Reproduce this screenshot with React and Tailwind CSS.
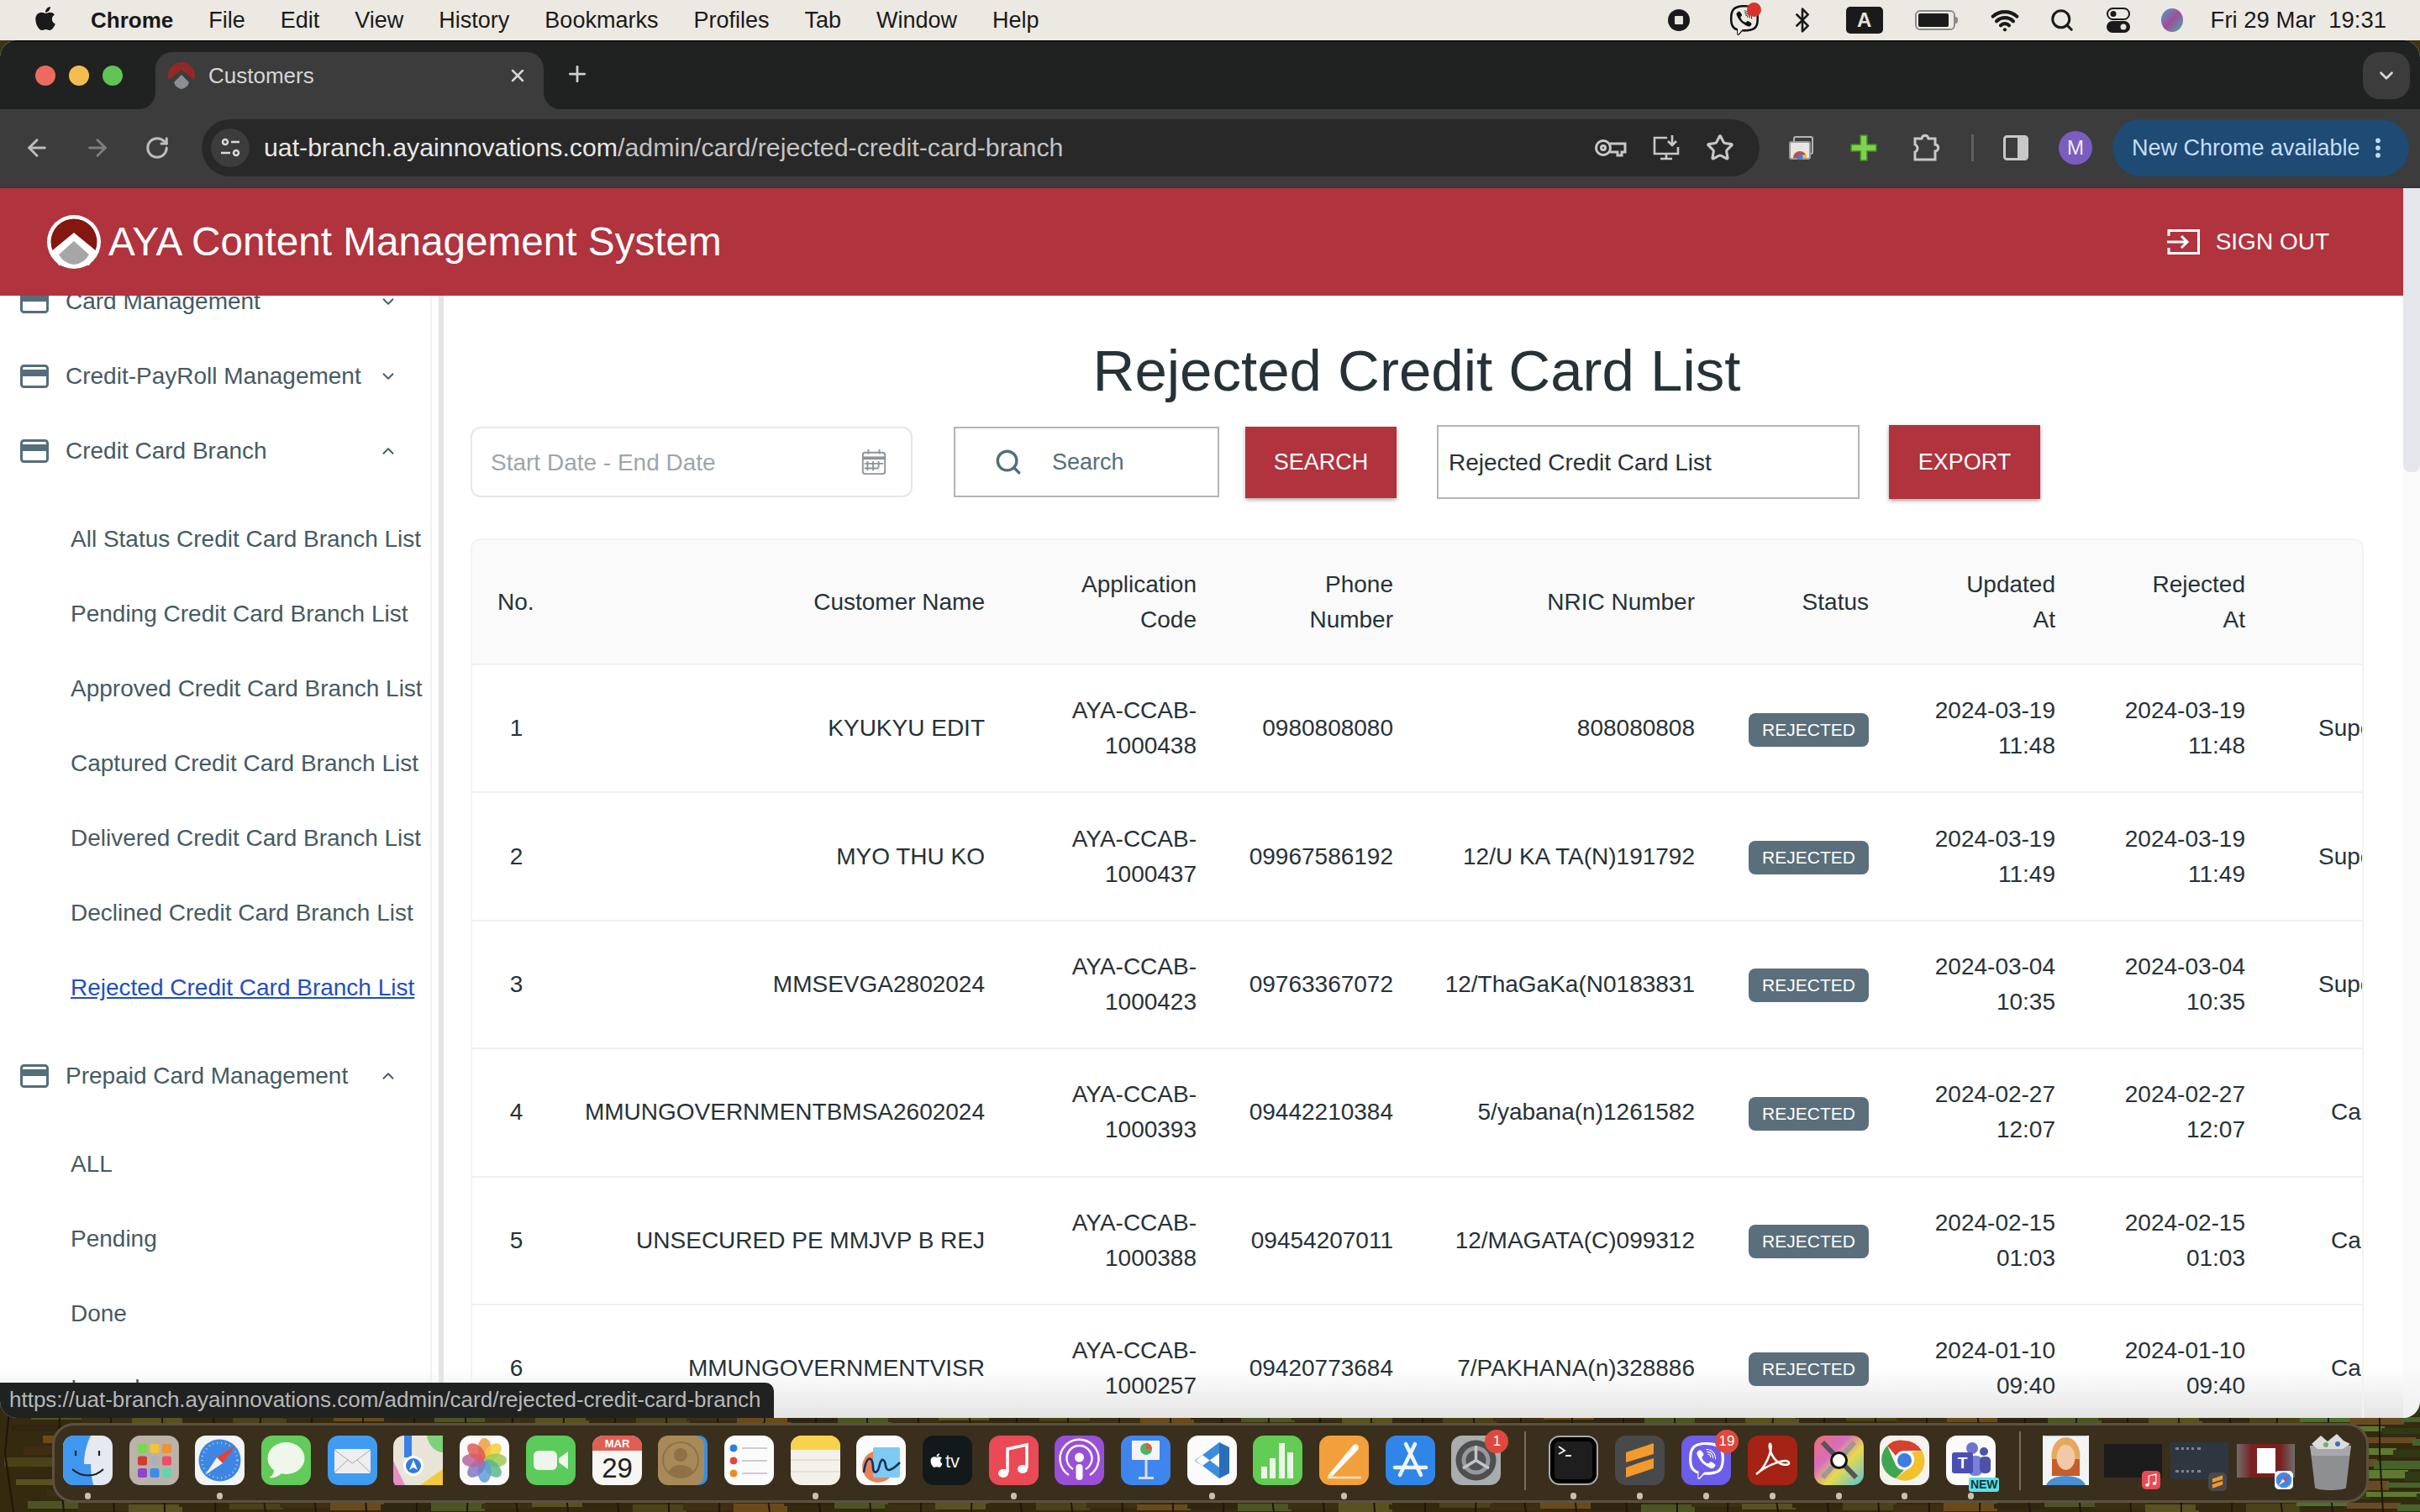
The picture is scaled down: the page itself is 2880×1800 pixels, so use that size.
import { ArrowLeft, ArrowRight, RotateCw, Star, Plus, X, ChevronDown, ChevronUp, Search, Bluetooth, Wifi, MoreVertical } from "lucide-react";
import { FaApple, FaViber } from "react-icons/fa";

const menuItems = ["File", "Edit", "View", "History", "Bookmarks", "Profiles", "Tab", "Window", "Help"];

const rows = [
  { no: 1, name: "KYUKYU EDIT", code: "1000438", phone: "0980808080", nric: "808080808", date: "2024-03-19", time: "11:48", last: "Super" },
  { no: 2, name: "MYO THU KO", code: "1000437", phone: "09967586192", nric: "12/U KA TA(N)191792", date: "2024-03-19", time: "11:49", last: "Super" },
  { no: 3, name: "MMSEVGA2802024", code: "1000423", phone: "09763367072", nric: "12/ThaGaKa(N0183831", date: "2024-03-04", time: "10:35", last: "Super" },
  { no: 4, name: "MMUNGOVERNMENTBMSA2602024", code: "1000393", phone: "09442210384", nric: "5/yabana(n)1261582", date: "2024-02-27", time: "12:07", last: "Card" },
  { no: 5, name: "UNSECURED PE MMJVP B REJ", code: "1000388", phone: "09454207011", nric: "12/MAGATA(C)099312", date: "2024-02-15", time: "01:03", last: "Card" },
  { no: 6, name: "MMUNGOVERNMENTVISR", code: "1000257", phone: "09420773684", nric: "7/PAKHANA(n)328886", date: "2024-01-10", time: "09:40", last: "Card" },
];

const branchLinks = [
  "All Status Credit Card Branch List",
  "Pending Credit Card Branch List",
  "Approved Credit Card Branch List",
  "Captured Credit Card Branch List",
  "Delivered Credit Card Branch List",
  "Declined Credit Card Branch List",
  "Rejected Credit Card Branch List",
];

// AYA logo in the header
const AyaLogo = ({ className }) => (
  <svg viewBox="0 0 64 64" className={className}>
    <circle cx="32" cy="32" r="32" fill="#fff" />
    <circle cx="32" cy="32" r="27.5" fill="#84170f" />
    <path d="M4 44 L32 21 L60 44 L50 60 H14 Z" fill="#fff" />
    <path d="M14 47 L32 31 L50 47 A23 23 0 0 1 32 59 A23 23 0 0 1 14 47Z" fill="#a6a6a6" />
  </svg>
);

// same mark, dimmed, as the tab favicon
const Favicon = () => (
  <svg viewBox="0 0 32 32" className="w-[32px] h-[32px] shrink-0">
    <circle cx="16" cy="16" r="16" fill="#93282a" />
    <path d="M0 22 L16 9 L32 22 V32 H0Z" fill="#3c3c3c" />
    <path d="M7 24 L16 15 L25 24 A11 11 0 0 1 16 32 A11 11 0 0 1 7 24Z" fill="#8b8f92" />
  </svg>
);

const CardIcon = () => (
  <svg viewBox="0 0 34 28" className="w-[34px] h-[28px] shrink-0">
    <rect x="1.5" y="1.5" width="31" height="25" rx="3" fill="none" stroke="#546e7a" strokeWidth="3" />
    <rect x="2" y="6" width="30" height="8" fill="#546e7a" />
  </svg>
);

const NavGroup = ({ label, open }) => (
  <div className="h-[89px] flex items-center pl-[24px] text-[#455a64] shrink-0">
    <CardIcon />
    <span className="ml-[20px] w-[375px] whitespace-nowrap">{label}</span>
    {open ? <ChevronUp size={22} strokeWidth={2} className="-ml-[2px]" /> : <ChevronDown size={22} strokeWidth={2} className="-ml-[2px]" />}
  </div>
);

const NavLink = ({ children, active }) => (
  <div className={`h-[89px] shrink-0 flex items-center pl-[84px] whitespace-nowrap ${active ? "text-[#1d4fc4] underline" : "text-[#455a64]"}`}>{children}</div>
);

const Sidebar = () => (
  <div className="w-[514px] shrink-0 border-r-2 border-[#f0f0f0] overflow-hidden text-[28px]">
    <div className="-mt-[38px] flex flex-col">
      <NavGroup label="Card Management" />
      <NavGroup label="Credit-PayRoll Management" />
      <NavGroup label="Credit Card Branch" open />
      <div className="py-[16px] flex flex-col">
        {branchLinks.map((l, i) => (
          <NavLink key={l} active={i === 6}>{l}</NavLink>
        ))}
      </div>
      <NavGroup label="Prepaid Card Management" open />
      <div className="py-[16px] flex flex-col">
        <NavLink>ALL</NavLink>
        <NavLink>Pending</NavLink>
        <NavLink>Done</NavLink>
        <NavLink>Issued</NavLink>
      </div>
    </div>
  </div>
);

const Th = ({ className = "", children }) => (
  <th className={`font-normal text-right pr-[32px] leading-[42px] border-b-2 border-[#f0f0f0] ${className}`}>{children}</th>
);

const Td = ({ className = "", children }) => (
  <td className={`text-right pr-[32px] leading-[42px] border-b-2 border-[#f0f0f0] ${className}`}>{children}</td>
);

const RejectedTable = () => (
  <div className="w-[2253px] mt-[47px] border-t-2 border-x-2 border-[#f2f2f2] rounded-t-[12px] overflow-hidden text-[28px] text-[#263238]">
    <table className="w-[2252px] table-fixed border-collapse">
      <thead>
        <tr className="h-[148px] bg-[#fafafa]">
          <Th className="w-[105px] !text-left pl-[30px]">No.</Th>
          <Th className="w-[537px]">Customer Name</Th>
          <Th className="w-[252px]">Application<br />Code</Th>
          <Th className="w-[234px]">Phone<br />Number</Th>
          <Th className="w-[359px]">NRIC Number</Th>
          <Th className="w-[207px]">Status</Th>
          <Th className="w-[222px]">Updated<br />At</Th>
          <Th className="w-[226px]">Rejected<br />At</Th>
          <Th></Th>
        </tr>
      </thead>
      <tbody>
        {rows.map((r) => (
          <tr key={r.no} className="h-[152.4px]">
            <td className="text-center border-b-2 border-[#f0f0f0]">{r.no}</td>
            <Td>{r.name}</Td>
            <Td>AYA-CCAB-<br />{r.code}</Td>
            <Td>{r.phone}</Td>
            <Td>{r.nric}</Td>
            <Td>
              <span className="inline-block w-[143px] h-[40px] rounded-[8px] bg-[#5a6f7b] text-white text-[21px] leading-[40px] text-center align-middle">REJECTED</span>
            </Td>
            <Td>{r.date}<br />{r.time}</Td>
            <Td>{r.date}<br />{r.time}</Td>
            <td className={`whitespace-nowrap overflow-hidden border-b-2 border-[#f0f0f0] ${r.last === "Card" ? "pl-[70px]" : "pl-[55px]"}`}>{r.last}</td>
          </tr>
        ))}
      </tbody>
    </table>
  </div>
);

const Toolbar = () => (
  <div className="flex items-center text-[28px]">
    <div className="w-[526px] h-[84px] shrink-0 border-2 border-[#e6e6ea] rounded-[12px] flex items-center justify-between pl-[22px] pr-[28px] text-[#9ea5a8]">
      <span className="pt-[2px]">Start Date - End Date</span>
      <svg viewBox="0 0 32 34" className="w-[32px] h-[32px]" fill="none" stroke="#8d9498" strokeWidth="2">
        <rect x="2" y="5" width="28" height="27" rx="3" />
        <path d="M2 12H30" strokeWidth="4" />
        <path d="M9 1V7M23 1V7M8 16V28M15 16V28M22 16V24M4 19H28M4 25H22" />
      </svg>
    </div>
    <div className="ml-[49px] w-[316px] h-[84px] shrink-0 border-2 border-[#b4b4b4] flex items-center pl-[46px] text-[#546e7a] text-[27px]">
      <Search size={34} strokeWidth={2.4} />
      <span className="ml-[35px]">Search</span>
    </div>
    <div className="ml-[31px] w-[180px] h-[85px] shrink-0 bg-[#b0333e] text-white text-[27px] flex items-center justify-center shadow-[0_2px_5px_rgba(0,0,0,0.35)]">SEARCH</div>
    <div className="ml-[48px] w-[503px] h-[88px] shrink-0 border-2 border-[#b4b4b4] flex items-center pl-[12px] pt-[2px] text-[#263238]">Rejected Credit Card List</div>
    <div className="ml-[35px] w-[180px] h-[88px] shrink-0 bg-[#b0333e] text-white text-[27px] flex items-center justify-center shadow-[0_2px_5px_rgba(0,0,0,0.35)]">EXPORT</div>
  </div>
);

const AppHeader = () => (
  <div className="h-[128px] bg-[#b0333e] flex items-center pl-[56px] pr-[88px] text-white shrink-0">
    <AyaLogo className="w-[64px] h-[64px]" />
    <span className="text-[47.7px] ml-[9px] whitespace-nowrap">AYA Content Management System</span>
    <div className="ml-auto flex items-center text-[28px]">
      <svg viewBox="0 0 40 32" className="w-[40px] h-[32px]" fill="none" stroke="#fff" strokeWidth="3">
        <path d="M2 9V2.5H37.5V29.5H2V23" />
        <path d="M0 16H24M17 9L24 16L17 23" />
      </svg>
      <span className="ml-[18px]">SIGN OUT</span>
    </div>
  </div>
);

const TabStrip = () => (
  <div className="h-[82px] bg-[#202221] border-t-2 border-[#111] flex items-end relative shrink-0">
    <div className="flex gap-[16px] absolute left-[42px] top-[28px]">
      <span className="w-[24px] h-[24px] rounded-full bg-[#ee6a5f]" />
      <span className="w-[24px] h-[24px] rounded-full bg-[#f5bd4f]" />
      <span className="w-[24px] h-[24px] rounded-full bg-[#61c455]" />
    </div>
    <div className="ml-[185px] w-[462px] h-[68px] bg-[#3c3c3c] rounded-t-[20px] flex items-center pl-[15px] pr-[19px] pb-[12px] relative text-[#d6d6d6] text-[26px]">
      <Favicon />
      <span className="ml-[16px]">Customers</span>
      <X size={24} strokeWidth={2.5} className="ml-auto" />
      <div className="absolute -left-[20px] bottom-0 w-[20px] h-[20px] bg-[#3c3c3c]"><div className="w-full h-full bg-[#202221] rounded-br-[20px]" /></div>
      <div className="absolute -right-[20px] bottom-0 w-[20px] h-[20px] bg-[#3c3c3c]"><div className="w-full h-full bg-[#202221] rounded-bl-[20px]" /></div>
    </div>
    <Plus size={30} strokeWidth={2.2} className="ml-[25px] mb-[27px] text-[#d0d0d0]" />
    <div className="absolute right-[12px] top-[12px] w-[56px] h-[56px] rounded-[20px] bg-[#3c3c3c] flex items-center justify-center text-[#d8d8d8]">
      <ChevronDown size={26} strokeWidth={2.5} />
    </div>
  </div>
);

const ExtIcon = () => (
  <svg viewBox="0 0 30 30" className="w-[30px] h-[30px] block">
    <rect x="6" y="2" width="22" height="20" rx="2" fill="#3c3c3c" stroke="#b4b4b4" strokeWidth="2" />
    <rect x="1" y="8" width="24" height="20" rx="2" fill="#e6e6e6" stroke="#9a9a9a" strokeWidth="2" />
    <path d="M5 27 A8 8 0 0 1 21 27Z" fill="#d0483a" />
    <path d="M13 27 A8 8 0 0 1 21 23 V27Z" fill="#f2c230" />
    <circle cx="13" cy="26" r="3.5" fill="#3f7de0" />
  </svg>
);

const BrowserBar = () => (
  <div className="h-[94px] bg-[#3c3c3c] flex items-center border-b-2 border-[#353535] shrink-0 text-[#bdbdbd]">
    <div className="w-[240px] shrink-0 flex items-center pl-[28px] gap-[40px]">
      <ArrowLeft size={32} strokeWidth={2.2} />
      <ArrowRight size={32} strokeWidth={2.2} className="text-[#7f7f7f]" />
      <RotateCw size={30} strokeWidth={2.4} />
    </div>
    <div className="w-[1854px] h-[68px] shrink-0 rounded-full bg-[#282828] flex items-center pl-[11px] pr-[30px]">
      <div className="w-[46px] h-[46px] rounded-full bg-[#3c3c3c] flex items-center justify-center">
        <svg viewBox="0 0 26 26" className="w-[26px] h-[26px]" fill="none" stroke="#d8d8d8" strokeWidth="2.5">
          <circle cx="7" cy="6" r="3" />
          <path d="M14 6H24M2 19H13" />
          <circle cx="20" cy="19" r="3" />
        </svg>
      </div>
      <span className="ml-[17px] text-[30.3px] text-[#e8e8e8] whitespace-nowrap">uat-branch.ayainnovations.com<span className="text-[#c4c4c4]">/admin/card/rejected-credit-card-branch</span></span>
      <div className="ml-auto flex items-center gap-[30px] text-[#c8c8c8]">
        <svg viewBox="0 0 38 26" className="w-[38px] h-[26px]" fill="none" stroke="#c8c8c8" strokeWidth="3">
          <circle cx="10" cy="13" r="8.5" />
          <circle cx="10" cy="13" r="2.5" />
          <path d="M18 8H36V18H32V22H27V18H18" />
        </svg>
        <svg viewBox="0 0 34 34" className="w-[34px] h-[34px]" fill="none" stroke="#c8c8c8" strokeWidth="2.6">
          <path d="M18 5H3V24H31V16" />
          <path d="M17 24V29M10 30H24" />
          <path d="M24 2V14M19 9L24 14L29 9" />
        </svg>
        <Star size={34} strokeWidth={2.2} />
      </div>
    </div>
    <div className="ml-[35px]"><ExtIcon /></div>
    <svg viewBox="0 0 32 32" className="ml-[43px] w-[32px] h-[32px]">
      <path d="M12 1H20V12H31V20H20V31H12V20H1V12H12Z" fill="#7fd14f" stroke="#3b8a1f" strokeWidth="1.5" />
    </svg>
    <svg viewBox="0 0 34 34" className="ml-[41px] w-[34px] h-[34px]" fill="none" stroke="#c8c8c8" strokeWidth="3">
      <path d="M4 6H12C13 1 19 1 20 6H28V13C33 14 33 20 28 21V31H4V22C8 20 8 15 4 13Z" />
    </svg>
    <span className="ml-[37px] w-[3px] h-[32px] bg-[#5f5f5f]" />
    <svg viewBox="0 0 30 30" className="ml-[35px] w-[30px] h-[30px]">
      <rect x="1.5" y="1.5" width="27" height="27" rx="3" fill="none" stroke="#c8c8c8" strokeWidth="3" />
      <rect x="17" y="2" width="11" height="26" fill="#c8c8c8" />
    </svg>
    <div className="ml-[36px] w-[40px] h-[40px] rounded-full bg-[#7b5cc0] text-[#eee] text-[24px] flex items-center justify-center">M</div>
    <div className="ml-[24px] w-[353px] h-[68px] rounded-full bg-[#1f4a74] text-[#c4dffb] text-[27px] flex items-center pl-[23px] whitespace-nowrap">
      New Chrome available
      <MoreVertical size={30} strokeWidth={2.6} className="ml-[6px]" />
    </div>
  </div>
);

const MenuBar = () => (
  <div className="h-[48px] bg-[#ece9e2] flex items-center text-[27px] text-[#1a1a1a] shrink-0">
    <FaApple size={32} className="ml-[38px] -mt-[4px]" />
    <span className="ml-[38px] font-bold text-[26px]">Chrome</span>
    <div className="ml-[42px] flex gap-[42px]">
      {menuItems.map((m) => <span key={m}>{m}</span>)}
    </div>
    <div className="ml-auto flex items-center pr-[40px]">
      <svg viewBox="0 0 28 28" className="w-[28px] h-[28px]"><circle cx="14" cy="14" r="13" fill="#1a1a1a" /><rect x="9" y="9" width="10" height="10" rx="1" fill="#e6e4dc" /></svg>
      <div className="ml-[46px] relative w-[36px] h-[40px] text-[#111] flex items-center justify-center">
        <FaViber size={38} />
        <span className="absolute -top-[1px] -right-[2px] w-[17px] h-[17px] rounded-full bg-[#d8332b]" />
      </div>
      <Bluetooth size={32} strokeWidth={2} className="ml-[35px]" />
      <div className="ml-[36px] w-[44px] h-[32px] rounded-[5px] bg-[#1a1a1a] text-[#e6e4dc] text-[24px] font-bold flex items-center justify-center">A</div>
      <div className="ml-[38px] w-[48px] h-[24px] rounded-[6px] border-2 border-[#8a8a8a] p-[2px]"><div className="w-[36px] h-full rounded-[2px] bg-[#1a1a1a]" /></div>
      <span className="w-[3px] h-[8px] bg-[#8a8a8a] rounded-r" />
      <Wifi size={34} strokeWidth={3} className="ml-[39px]" />
      <Search size={30} strokeWidth={2.4} className="ml-[36px]" />
      <svg viewBox="0 0 28 30" className="ml-[38px] w-[28px] h-[30px]">
        <rect x="1" y="1" width="26" height="13" rx="6.5" fill="none" stroke="#1a1a1a" strokeWidth="2" />
        <circle cx="8" cy="7.5" r="3.5" fill="#1a1a1a" />
        <rect x="0" y="16" width="28" height="14" rx="7" fill="#1a1a1a" />
        <circle cx="20" cy="23" r="3.5" fill="#e6e4dc" />
      </svg>
      <svg viewBox="0 0 28 30" className="ml-[36px] w-[28px] h-[30px]">
        <defs>
          <linearGradient id="siri" x1="0" y1="0" x2="1" y2="1"><stop offset="0" stopColor="#4aa3c9" /><stop offset="0.5" stopColor="#a24c9b" /><stop offset="1" stopColor="#38b6a6" /></linearGradient>
        </defs>
        <ellipse cx="14" cy="15" rx="13" ry="14" fill="url(#siri)" />
      </svg>
      <span className="ml-[32px] whitespace-pre text-[27.5px]">Fri 29 Mar  19:31</span>
    </div>
  </div>
);

// dock tiles
const Tile = ({ dot, badge, children }) => (
  <div className="relative w-[59px] h-[59px] shrink-0">
    {children}
    {dot && <span className="absolute left-[26px] -bottom-[17px] w-[7px] h-[8px] rounded-full bg-[#c9c0ab]" />}
    {badge && <span className="absolute -right-[9px] -top-[7px] min-w-[28px] h-[28px] rounded-full bg-[#e0483e] text-white text-[17px] flex items-center justify-center">{badge}</span>}
  </div>
);

const Svg = ({ children }) => <svg viewBox="0 0 59 59" className="w-[59px] h-[59px] block">{children}</svg>;

const DockIcons = {
  finder: (
    <Svg>
      <rect width="59" height="59" rx="13" fill="#e4e9f2" />
      <path d="M13 0H33C27 12 25 24 25 34H33C33 42 34 50 36 59H13A13 13 0 0 1 0 46V13A13 13 0 0 1 13 0Z" fill="#3f97f0" />
      <path d="M15 18V24M43 18V24" stroke="#222" strokeWidth="2.2" />
      <path d="M11 40C22 50 38 50 48 40" stroke="#222" strokeWidth="2" fill="none" />
    </Svg>
  ),
  launchpad: (
    <Svg>
      <rect width="59" height="59" rx="13" fill="#b9b3aa" />
      {["#7bd850", "#f4c433", "#ef9430", "#d63a2f", "#aab0b4", "#ef4c68", "#8f44cf", "#3b8cf2", "#63d4ae"].map((c, i) => (
        <rect key={c} x={10 + (i % 3) * 14.5} y={10 + Math.floor(i / 3) * 14.5} width="11" height="11" rx="2.5" fill={c} />
      ))}
    </Svg>
  ),
  safari: (
    <Svg>
      <rect width="59" height="59" rx="13" fill="#f4f4f4" />
      <circle cx="29.5" cy="29.5" r="25" fill="#3d86e4" />
      <circle cx="29.5" cy="29.5" r="21" fill="none" stroke="#a8cdf5" strokeWidth="2.5" strokeDasharray="1 4" />
      <polygon points="48,12 33,33 26,26" fill="#e8402f" />
      <polygon points="12,47 33,33 26,26" fill="#f2f2f2" />
    </Svg>
  ),
  messages: (
    <Svg>
      <rect width="59" height="59" rx="13" fill="#62cb5c" />
      <ellipse cx="29.5" cy="27" rx="22" ry="19" fill="#eef7ea" />
      <path d="M15 40C15 46 12 49 9 50C15 51 20 49 24 45Z" fill="#eef7ea" />
    </Svg>
  ),
  mail: (
    <Svg>
      <rect width="59" height="59" rx="13" fill="#3f9cf0" />
      <rect x="8" y="16" width="43" height="29" rx="2" fill="#eeeeee" />
      <path d="M8 17L29.5 33L51 17M8 44L24 29M51 44L35 29" stroke="#aaa" fill="none" />
    </Svg>
  ),
  maps: (
    <Svg>
      <rect width="59" height="59" rx="13" fill="#e8e4d8" />
      <path d="M0 30L14 59H2L0 55Z" fill="#e58fc6" />
      <path d="M32 59L59 40V59Z" fill="#f5c93c" />
      <path d="M40 0H59V20C50 20 42 12 40 0Z" fill="#7ed07a" />
      <path d="M13 0H22V26H13Z" fill="#3b80e8" />
      <circle cx="24" cy="36" r="12" fill="#fff" />
      <circle cx="24" cy="36" r="9" fill="#2f7ae5" />
      <path d="M24 29L29 41L24 38L19 41Z" fill="#fff" />
    </Svg>
  ),
  photos: (
    <Svg>
      <rect width="59" height="59" rx="13" fill="#fafafa" />
      {["#f19a3e", "#f3cf3b", "#9ccb54", "#5cb58e", "#5f9fd8", "#8277c4", "#b9649f", "#df5b57"].map((c, i) => (
        <ellipse key={c} cx="29.5" cy="16" rx="8" ry="13" fill={c} opacity="0.85" transform={`rotate(${i * 45} 29.5 29.5)`} />
      ))}
    </Svg>
  ),
  facetime: (
    <Svg>
      <rect width="59" height="59" rx="13" fill="#5bcb5b" />
      <rect x="9" y="18" width="28" height="23" rx="6" fill="#eef5ec" />
      <path d="M39 27L50 19V40L39 32Z" fill="#eef5ec" />
    </Svg>
  ),
  calendar: (
    <Svg>
      <rect width="59" height="59" rx="13" fill="#f7f6f2" />
      <path d="M13 0H46A13 13 0 0 1 59 13V18H0V13A13 13 0 0 1 13 0Z" fill="#e05f55" />
      <text x="29.5" y="14" textAnchor="middle" fontSize="13" fontWeight="700" fill="#fff">MAR</text>
      <text x="29.5" y="50" textAnchor="middle" fontSize="33" fill="#222">29</text>
    </Svg>
  ),
  contacts: (
    <Svg>
      <rect x="4" width="55" height="59" rx="10" fill="#3b8ee0" />
      <rect width="55" height="59" rx="12" fill="#a78a58" />
      <circle cx="27" cy="29" r="21" fill="none" stroke="#8c7246" strokeWidth="2" />
      <circle cx="27" cy="23" r="8" fill="#8c7246" />
      <path d="M12 44C16 32 38 32 42 44C34 52 20 52 12 44Z" fill="#8c7246" />
    </Svg>
  ),
  reminders: (
    <Svg>
      <rect width="59" height="59" rx="13" fill="#fbfbfb" />
      {[["#2f7de0", 15], ["#e0483e", 30], ["#ee8a26", 45]].map(([c, y]) => (
        <g key={c}>
          <circle cx="11" cy={y} r="5" fill={c} stroke="#fff" strokeWidth="1" />
          <path d={`M21 ${y}H51`} stroke="#ccc" strokeWidth="2" />
        </g>
      ))}
    </Svg>
  ),
  notes: (
    <Svg>
      <rect width="59" height="59" rx="13" fill="#f3f1ea" />
      <path d="M13 0H46A13 13 0 0 1 59 13V17H0V13A13 13 0 0 1 13 0Z" fill="#f8d24a" />
      <path d="M0 29H59M0 43H59" stroke="#dedbd0" strokeWidth="1.5" />
    </Svg>
  ),
  freeform: (
    <Svg>
      <rect width="59" height="59" rx="13" fill="#fbfbfb" />
      <circle cx="26" cy="37" r="19" fill="#ea8259" />
      <rect x="20" y="14" width="32" height="36" rx="2" fill="#7ccbf2" />
      <path d="M9 44C12 22 20 24 20 38C20 46 26 46 28 34C30 26 34 28 35 36C36 44 42 42 52 32" stroke="#15305c" strokeWidth="2.6" fill="none" />
    </Svg>
  ),
  tv: (
    <Svg>
      <rect width="59" height="59" rx="13" fill="#12191a" />
      <g transform="translate(7 20)"><FaApple size={19} color="#fff" /></g>
      <text x="27" y="38" fontSize="22" fill="#eee">tv</text>
    </Svg>
  ),
  music: (
    <Svg>
      <rect width="59" height="59" rx="13" fill="#ea4a55" />
      <path d="M22 44V16L45 11V39" stroke="#fff" strokeWidth="3.5" fill="none" />
      <ellipse cx="17" cy="45" rx="6" ry="5" fill="#fff" />
      <ellipse cx="40" cy="40" rx="6" ry="5" fill="#fff" />
    </Svg>
  ),
  podcasts: (
    <Svg>
      <rect width="59" height="59" rx="13" fill="#9a4fd6" />
      <path d="M17 47A23 23 0 1 1 42 47M22 40A15 15 0 1 1 37 40" stroke="#fff" strokeWidth="2.4" fill="none" />
      <circle cx="29.5" cy="26" r="5.5" fill="#fff" />
      <rect x="25.5" y="34" width="8" height="19" rx="4" fill="#fff" />
    </Svg>
  ),
  keynote: (
    <Svg>
      <rect width="59" height="59" rx="13" fill="#3e86ee" />
      <rect x="13" y="6" width="33" height="23" rx="1" fill="#f4f4f4" />
      <circle cx="30" cy="16" r="7" fill="#4cb56a" />
      <path d="M30 16V9A7 7 0 0 1 37 16Z" fill="#e8553f" />
      <path d="M30 29V50" stroke="#ddd" strokeWidth="3" />
      <rect x="21" y="49" width="18" height="3" fill="#ddd" />
    </Svg>
  ),
  vscode: (
    <Svg>
      <rect width="59" height="59" rx="13" fill="#fbfbfb" />
      <path d="M38 8L50 14V45L38 51V8Z" fill="#2a6db8" />
      <path d="M38 8V21L18 36L9 30L38 8ZM38 51V38L18 23L9 29L38 51Z" fill="#3c8edc" />
    </Svg>
  ),
  numbers: (
    <Svg>
      <rect width="59" height="59" rx="13" fill="#62cc55" />
      <rect x="10" y="37" width="7" height="14" fill="#ecf6e8" />
      <rect x="20" y="27" width="7" height="24" fill="#ecf6e8" />
      <rect x="31" y="9" width="7" height="42" fill="#ecf6e8" />
      <rect x="41" y="20" width="7" height="31" fill="#ecf6e8" />
    </Svg>
  ),
  pages: (
    <Svg>
      <rect width="59" height="59" rx="13" fill="#f2a03c" />
      <path d="M10 48L40 12C44 8 49 12 46 17L14 50Z" fill="#fafafa" />
      <path d="M10 50H50" stroke="#fbe0ba" strokeWidth="2.5" />
    </Svg>
  ),
  appstore: (
    <Svg>
      <rect width="59" height="59" rx="13" fill="#2f86e8" />
      <path d="M11 38H48M24 10L42 47M35 10L17 47" stroke="#eef5fd" strokeWidth="4.5" strokeLinecap="round" />
    </Svg>
  ),
  settings: (
    <Svg>
      <rect width="59" height="59" rx="13" fill="#a9adae" />
      <circle cx="29.5" cy="29.5" r="24" fill="#4d4f50" />
      <circle cx="29.5" cy="29.5" r="17" fill="#97999a" />
      <circle cx="29.5" cy="29.5" r="12" fill="#505253" />
      <path d="M29.5 29.5V12M29.5 29.5L14 39M29.5 29.5L45 39" stroke="#c4c6c6" strokeWidth="3.5" />
    </Svg>
  ),
  terminal: (
    <Svg>
      <rect x="1" y="1" width="57" height="57" rx="12" fill="#000" stroke="#a9acae" strokeWidth="2" />
      <rect x="7" y="7" width="45" height="45" rx="5" fill="#1e1e1e" />
      <path d="M12 13L19 18L12 22M20 24H27" stroke="#eee" strokeWidth="2" fill="none" />
    </Svg>
  ),
  sublime: (
    <Svg>
      <rect width="59" height="59" rx="13" fill="#48494a" />
      <path d="M46 9V22L13 32V20ZM46 27V39L13 50V38L30 32Z" fill="#f29a2b" />
    </Svg>
  ),
  viber: (
    <div className="w-[59px] h-[59px] rounded-[13px] bg-[#6b5ee8] flex items-center justify-center text-white"><FaViber size={44} /></div>
  ),
  acrobat: (
    <Svg>
      <rect width="59" height="59" rx="13" fill="#a42314" />
      <path d="M10 46C20 40 30 18 27 10C24 8 26 26 38 33C44 36 52 35 48 31C44 28 24 34 10 46Z" stroke="#fff" strokeWidth="2.6" fill="none" />
    </Svg>
  ),
  colorsync: (
    <Svg>
      <defs>
        <linearGradient id="csync" x1="0" y1="0" x2="1" y2="1"><stop offset="0" stopColor="#ef6f6f" /><stop offset="0.35" stopColor="#d66dc0" /><stop offset="0.6" stopColor="#e8d94c" /><stop offset="1" stopColor="#55c3de" /></linearGradient>
      </defs>
      <rect width="59" height="59" rx="13" fill="url(#csync)" />
      <path d="M10 8L50 50" stroke="#555" strokeWidth="6" />
      <path d="M48 8L10 50" stroke="#999" strokeWidth="6" />
      <circle cx="29.5" cy="29.5" r="9" fill="#fff" stroke="#111" strokeWidth="3" />
    </Svg>
  ),
  chrome: (
    <Svg>
      <rect width="59" height="59" rx="13" fill="#f3f2ec" />
      <path d="M29.5 6A23.5 23.5 0 0 1 50 18H29.5A11.5 11.5 0 0 0 19 24L9 12A23.5 23.5 0 0 1 29.5 6Z" fill="#d8402f" />
      <path d="M9 12L19 35A11.5 11.5 0 0 0 29 41L19 51A23.5 23.5 0 0 1 9 12Z" fill="#3fa652" />
      <path d="M50 18A23.5 23.5 0 0 1 19 51L39 35A11.5 11.5 0 0 0 38 20Z" fill="#f3c02e" />
      <circle cx="29.5" cy="29.5" r="11" fill="#fff" />
      <circle cx="29.5" cy="29.5" r="8.5" fill="#3f7de0" />
    </Svg>
  ),
  teams: (
    <Svg>
      <rect width="59" height="59" rx="13" fill="#fbfbfb" />
      <circle cx="31" cy="15" r="7" fill="#6f74cf" />
      <circle cx="45" cy="19" r="5" fill="#4d52a8" />
      <rect x="26" y="24" width="18" height="24" rx="8" fill="#7b80d8" />
      <rect x="40" y="25" width="13" height="20" rx="5" fill="#4d52a8" />
      <rect x="7" y="20" width="25" height="25" rx="3" fill="#4b50b0" />
      <text x="19.5" y="39" textAnchor="middle" fontSize="19" fontWeight="700" fill="#fff">T</text>
    </Svg>
  ),
  doc: (
    <Svg>
      <rect x="2" y="-5" width="55" height="69" fill="#f4f4f4" />
      <rect x="4" y="-2" width="51" height="3" fill="#a9c8e6" />
      <ellipse cx="29.5" cy="24" rx="17" ry="22" fill="#e6a85c" />
      <rect x="13" y="28" width="33" height="20" fill="#c65e2c" />
      <ellipse cx="29.5" cy="26" rx="11" ry="15" fill="#f3c8a6" />
      <path d="M6 60C9 44 50 44 53 60Z" fill="#4a90d4" />
    </Svg>
  ),
  trash: (
    <svg viewBox="0 0 59 68" className="w-[59px] h-[68px] block -mt-[4px]">
      <path d="M5 14H54L48 64C47 68 12 68 11 64Z" fill="#8d8f90" />
      <path d="M5 14H54L52 26H7Z" fill="#a6a8a9" />
      <path d="M7 12L18 2L26 9L37 0L45 8L53 12L44 18H14Z" fill="#dcdcdc" />
      <circle cx="24" cy="13" r="3" fill="#6db06c" />
      <circle cx="38" cy="12" r="3" fill="#3d6fb8" />
    </svg>
  ),
};

// window minimised to the dock, with the owning app's icon on its corner
const WindowThumb = ({ app, className, children }) => (
  <div className={`relative w-[69px] h-[40px] shrink-0 ${className}`}>
    {children}
    <div className="absolute right-[2px] -bottom-[14px] w-[22px] h-[22px] overflow-hidden">
      <div className="origin-top-left scale-[0.373]">{DockIcons[app]}</div>
    </div>
  </div>
);

const dockLeft = [
  ["finder", true], ["launchpad"], ["safari", true], ["messages"], ["mail"], ["maps"], ["photos"], ["facetime"], ["calendar"], ["contacts"], ["reminders"], ["notes", true],
  ["freeform"], ["tv"], ["music", true], ["podcasts"], ["keynote"], ["vscode", true], ["numbers"], ["pages", true], ["appstore"], ["settings", false, "1"],
];
const dockApps = [["terminal", true], ["sublime", true], ["viber", true, "19"], ["acrobat", true], ["colorsync", true], ["chrome", true], ["teams", true]];

const Dock = () => (
  <div className="mt-[6px] ml-[62px] w-[2757px] h-[95px] rounded-[26px] bg-[#3a2f1c] border-[3px] border-[#5a5240] flex items-center pl-[10px] pb-[6px] relative z-10">
    <div className="flex gap-[19.7px]">
      {dockLeft.map(([k, d, b]) => <Tile key={k} dot={d} badge={b}>{DockIcons[k]}</Tile>)}
    </div>
    <span className="ml-[28px] mr-[27px] w-[2px] h-[70px] bg-[#7a6e55]" />
    <div className="flex gap-[19.8px]">
      {dockApps.map(([k, d, b]) => (
        <Tile key={k} dot={d} badge={b}>
          {DockIcons[k]}
          {k === "teams" && <span className="absolute -right-[4px] -bottom-[8px] w-[36px] h-[17px] bg-[#5fe0e6] rounded-[3px] text-[#10353a] text-[14px] font-bold leading-[17px] text-center">NEW</span>}
        </Tile>
      ))}
    </div>
    <span className="ml-[28px] mr-[24px] w-[2px] h-[70px] bg-[#7a6e55]" />
    <Tile>{DockIcons.doc}</Tile>
    <div className="ml-[16px] flex gap-[10px] items-center">
      <WindowThumb app="music" className="bg-[#1c1c1c]" />
      <WindowThumb app="sublime" className="bg-[#2e3640] h-[44px]">
        <div className="w-[30px] h-[30px] ml-[6px] mt-[6px] border-t-[3px] border-b-[3px] border-dotted border-[#7c8490]" />
      </WindowThumb>
      <WindowThumb app="safari" className="bg-[linear-gradient(90deg,#6e6e6e,#7a2020_25%,#7a2020_75%,#6e6e6e)]">
        <div className="w-[22px] h-[30px] bg-white mx-auto mt-[5px]" />
      </WindowThumb>
    </div>
    <div className="ml-[13px]"><Tile>{DockIcons.trash}</Tile></div>
  </div>
);

// wallpaper behind the dock, rows of vines
const leftBands = ["#3a3012", "#4a4218", "#2f2610", "#57521f", "#3f2e12", "#4b5522", "#33290f", "#6b4a1a"];
const rightBands = ["#4f6f2c", "#2f3a15", "#5d7a30", "#3c3414", "#47622a", "#6a4a22"];
const Wallpaper = () => (
  <svg viewBox="0 0 2880 130" preserveAspectRatio="none" className="absolute left-0 bottom-0 w-[2880px] h-[130px]">
    <rect width="2880" height="130" fill="#332a10" />
    {Array.from({ length: 10 }).map((_, y) =>
      Array.from({ length: 48 }).map((_, x) => (
        <rect
          key={`${x}-${y}`}
          x={x * 60 + (y * 37) % 60}
          y={y * 13 + (x * 7) % 5}
          width="64"
          height={6 + (x + y) % 6}
          fill={x > 44 ? rightBands[(x * 5 + y * 3) % 6] : leftBands[(x * 3 + y * 5) % 8]}
        />
      ))
    )}
    {Array.from({ length: 48 }).map((_, x) => (
      <path key={x} d={`M${x * 60 + 12} 0L${x * 60 + 6 + (x % 5) * 3} 60L${x * 60 + 16} 130`} stroke="#1e160a" strokeWidth="2" fill="none" />
    ))}
  </svg>
);

function App() {
  return (
    <div className="w-[2880px] h-[1800px] relative overflow-hidden flex flex-col font-['Liberation_Sans',sans-serif] bg-[#3d3414]">
      <Wallpaper />
      <MenuBar />
      <div className="h-[1640px] relative rounded-[20px] overflow-hidden bg-[linear-gradient(180deg,#fff_96.4%,#e4e4e4)] flex flex-col shrink-0">
        <TabStrip />
        <BrowserBar />
        <div className="flex-1 flex min-h-0">
          <div className="flex-1 flex flex-col min-w-0">
            <AppHeader />
            <div className="flex-1 flex min-h-0">
              <Sidebar />
              <div className="w-[16px] shrink-0 pl-[8px]"><div className="w-[6px] h-full bg-[#e4e4e4]" /></div>
              <div className="flex-1 pl-[30px] overflow-hidden">
                <h1 className="pt-[50px] w-[2252px] text-center text-[69px] leading-[80px] text-[#263238]">Rejected Credit Card List</h1>
                <div className="mt-[24px]"><Toolbar /></div>
                <RejectedTable />
              </div>
            </div>
          </div>
          <div className="w-[20px] shrink-0 bg-[#f6f6f8]/60"><div className="h-[338px] bg-[#e5e5ec] rounded-b-[8px]" /></div>
        </div>
        <div className="absolute left-0 bottom-0 w-[921px] h-[42px] bg-[#1f2221] rounded-tr-[10px] text-[#b8b8b8] text-[26px] leading-[40px] pl-[11px] whitespace-nowrap">https://uat-branch.ayainnovations.com/admin/card/rejected-credit-card-branch</div>
      </div>
      <Dock />
    </div>
  );
}

export default App;
